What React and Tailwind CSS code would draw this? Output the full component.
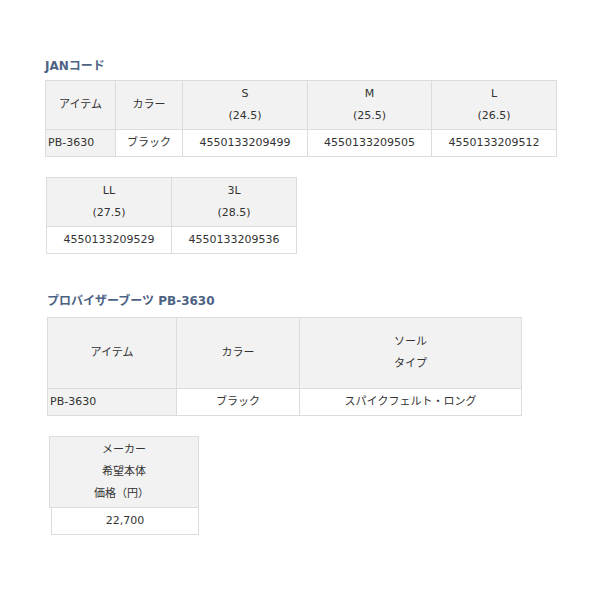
const font = "font-['DejaVu_Sans','Noto_Sans_CJK_JP',sans-serif]";

function Th({ children, className = '' }) {
  return (
    <td className={`border border-[#dcdcdc] bg-[#f2f2f2] p-0 text-center align-middle ${className}`}>
      {children}
    </td>
  );
}

function Td({ children, className = '' }) {
  return (
    <td className={`border border-[#dcdcdc] bg-white p-0 text-center align-middle ${className}`}>
      {children}
    </td>
  );
}

function SizeHead({ size, cm }) {
  return (
    <Th>
      <div>{size}</div>
      <div>({cm})</div>
    </Th>
  );
}

export default function App() {
  return (
    <div className={`min-h-[600px] w-[600px] bg-white pl-[45px] pt-[57px] text-[11px] leading-[22px] text-[#333333] ${font}`}>
      <h2 className="h-[18px] text-[12px] font-bold leading-[18px] text-[#4d6384]">JANコード</h2>

      <table className="mt-[5px] w-[511px] table-fixed border-collapse">
        <colgroup>
          <col className="w-[70px]" />
          <col className="w-[67px]" />
          <col className="w-[125px]" />
          <col className="w-[124px]" />
          <col className="w-[125px]" />
        </colgroup>
        <tbody>
          <tr className="h-[49px]">
            <Th>アイテム</Th>
            <Th>カラー</Th>
            <SizeHead size="S" cm="24.5" />
            <SizeHead size="M" cm="25.5" />
            <SizeHead size="L" cm="26.5" />
          </tr>
          <tr className="h-[27px]">
            <Th className="pl-[2px] !text-left">PB-3630</Th>
            <Td>ブラック</Td>
            <Td>4550133209499</Td>
            <Td>4550133209505</Td>
            <Td>4550133209512</Td>
          </tr>
        </tbody>
      </table>

      <table className="ml-[1px] mt-[20px] w-[250px] table-fixed border-collapse">
        <colgroup>
          <col className="w-[125px]" />
          <col className="w-[125px]" />
        </colgroup>
        <tbody>
          <tr className="h-[49px]">
            <SizeHead size="LL" cm="27.5" />
            <SizeHead size="3L" cm="28.5" />
          </tr>
          <tr className="h-[27px]">
            <Td>4550133209529</Td>
            <Td>4550133209536</Td>
          </tr>
        </tbody>
      </table>

      <h2 className="ml-[2px] mt-[38px] h-[18px] text-[12px] font-bold leading-[18px] text-[#4d6384]">
        プロバイザーブーツ PB-3630
      </h2>

      <table className="ml-[2px] mt-[7px] w-[474px] table-fixed border-collapse">
        <colgroup>
          <col className="w-[129px]" />
          <col className="w-[123px]" />
          <col className="w-[222px]" />
        </colgroup>
        <tbody>
          <tr className="h-[71px]">
            <Th>アイテム</Th>
            <Th>カラー</Th>
            <Th>
              <div>ソール</div>
              <div>タイプ</div>
            </Th>
          </tr>
          <tr className="h-[27px]">
            <Th className="pl-[2px] !text-left">PB-3630</Th>
            <Td>ブラック</Td>
            <Td>スパイクフェルト・ロング</Td>
          </tr>
        </tbody>
      </table>

      <div className="ml-[4px] mt-[20px] w-[150px]">
        <div className="flex h-[72px] flex-col items-center justify-center border border-[#dcdcdc] bg-[#f2f2f2]">
          <div>メーカー</div>
          <div>希望本体</div>
          <div className="-ml-[5px]">価格（円）</div>
        </div>
        <div className="ml-[2px] flex h-[27px] items-center justify-center border border-t-0 border-[#dcdcdc] bg-white">
          22,700
        </div>
      </div>
    </div>
  );
}
